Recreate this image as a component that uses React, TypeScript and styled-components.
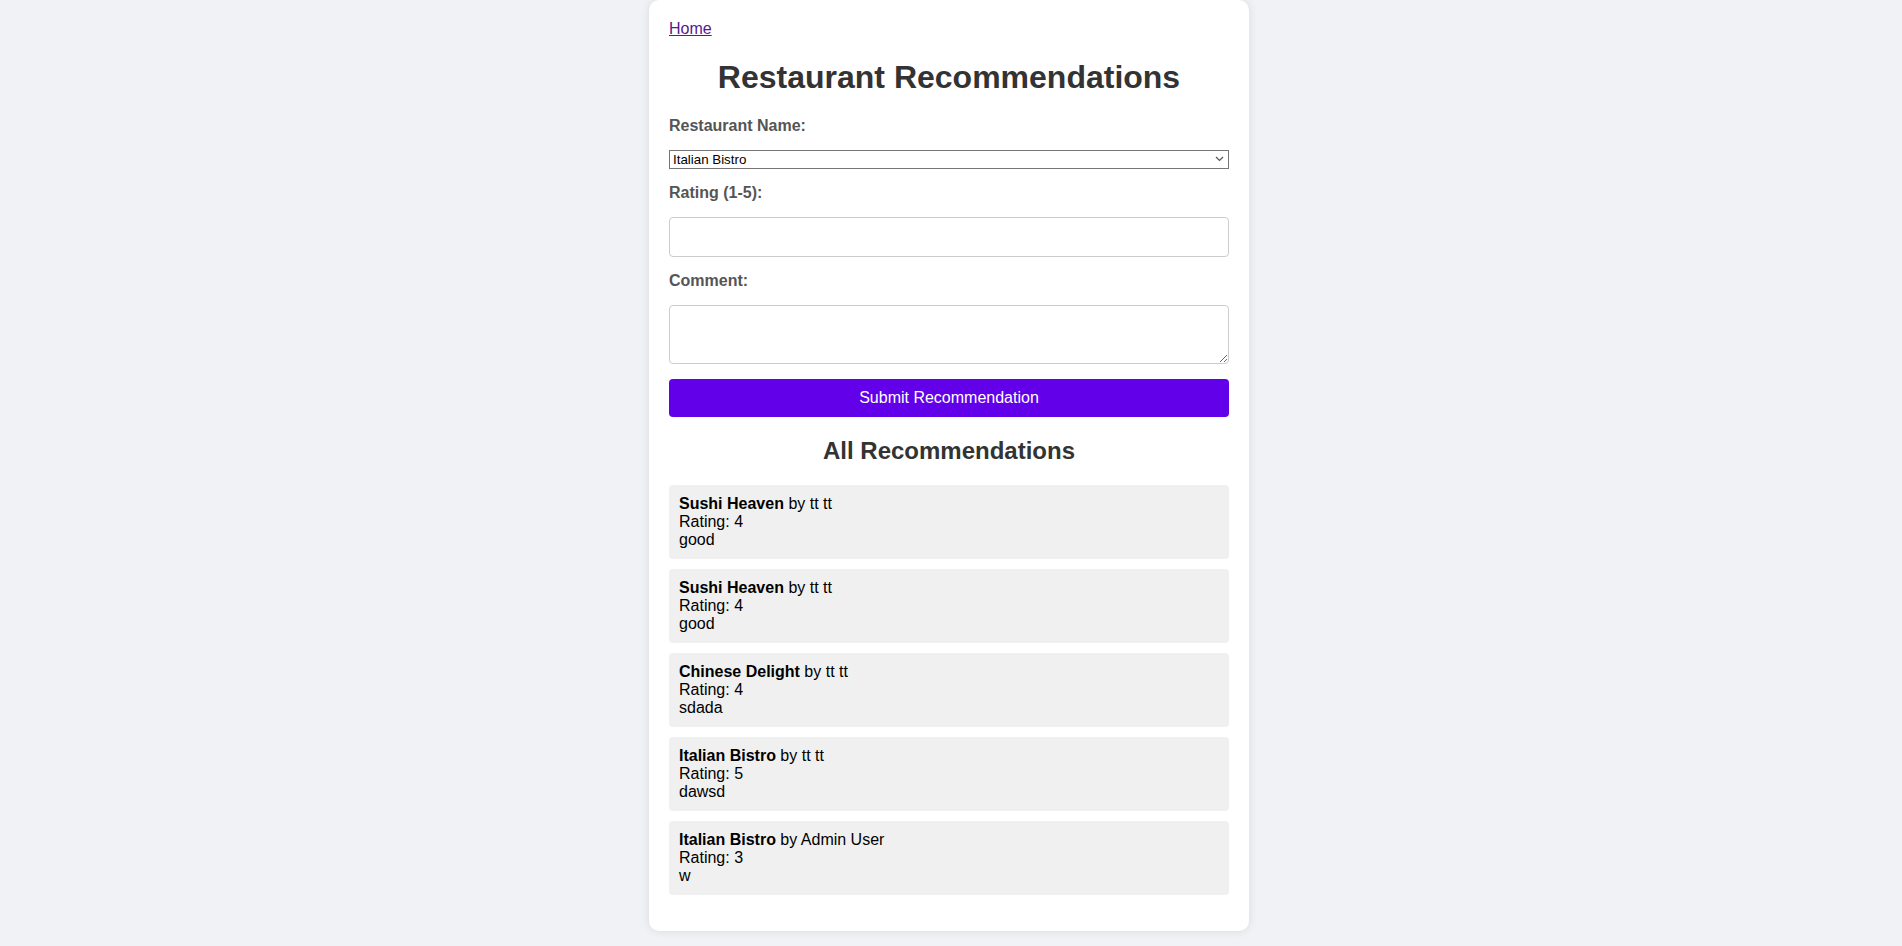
import styled, { createGlobalStyle } from 'styled-components'
import * as React from 'react'

const Global = createGlobalStyle`
  * {
    box-sizing: border-box;
  }
  body {
    margin: 0;
    padding: 0 4px 0 0;
    background: #f0f2f5;
    font-family: Arial, "Liberation Sans", sans-serif;
  }
`

const Card = styled.div`
  width: 600px;
  margin: 0 auto 15px;
  padding: 20px;
  background: #fff;
  border-radius: 10px;
  box-shadow: 0 0 10px rgba(0, 0, 0, 0.1);
`

const HomeLink = styled.a`
  display: inline-block;
  font-size: 16px;
  line-height: 18px;
  color: #551a8b;
  text-decoration: underline;
`

const Title = styled.h1`
  font-size: 32px;
  color: #333;
  text-align: center;
  margin: 21px 0;
`

const Form = styled.form`
  display: flex;
  flex-direction: column;
  gap: 15px;
`

const Label = styled.label`
  display: block;
  font-weight: bold;
  font-size: 16px;
  line-height: 18px;
  color: #555;
`

const SelectWrap = styled.div`
  position: relative;
  height: 19px;
`

const Select = styled.select`
  appearance: none;
  width: 100%;
  height: 19px;
  padding: 0 20px 0 3px;
  font-family: Arial, "Liberation Sans", sans-serif;
  font-size: 13.33px;
  color: #000;
  background: #fff;
  border: 1px solid #767676;
  border-radius: 0;
`

const Chevron = styled.svg`
  position: absolute;
  right: 5px;
  top: 6px;
  width: 9px;
  height: 6px;
  pointer-events: none;
`

const Input = styled.input`
  width: 100%;
  height: 40px;
  padding: 10px;
  font-size: 16px;
  border: 1px solid #ccc;
  border-radius: 4px;
`

const TextArea = styled.textarea`
  width: 100%;
  height: 59px;
  padding: 10px;
  font-size: 16px;
  font-family: Arial, "Liberation Sans", sans-serif;
  border: 1px solid #ccc;
  border-radius: 4px;
  display: block;
`

const SubmitButton = styled.button`
  width: 100%;
  height: 38px;
  padding: 10px;
  background: #6200ea;
  color: #fff;
  font-family: Arial, "Liberation Sans", sans-serif;
  font-size: 16px;
  line-height: 18px;
  border: none;
  border-radius: 4px;
  cursor: pointer;
`

const SubTitle = styled.h2`
  font-size: 24px;
  color: #333;
  text-align: center;
  margin: 20px 0;
`

const List = styled.ul`
  list-style: none;
  padding: 0;
  margin: 0 0 16px;
`

const Item = styled.li`
  background: #f0f0f0;
  padding: 10px;
  border-radius: 4px;
  font-size: 16px;
  line-height: 18px;
  color: #000;
  & + & {
    margin-top: 10px;
  }
`

const recs = [
  { name: 'Sushi Heaven', by: 'tt tt', rating: 4, comment: 'good' },
  { name: 'Sushi Heaven', by: 'tt tt', rating: 4, comment: 'good' },
  { name: 'Chinese Delight', by: 'tt tt', rating: 4, comment: 'sdada' },
  { name: 'Italian Bistro', by: 'tt tt', rating: 5, comment: 'dawsd' },
  { name: 'Italian Bistro', by: 'Admin User', rating: 3, comment: 'w' },
]

export default function App () {
  return (
    <>
      <Global/>
      <Card>
        <HomeLink href='#'>Home</HomeLink>
        <Title>Restaurant Recommendations</Title>
        <Form onSubmit={e => e.preventDefault()}>
          <Label>Restaurant Name:</Label>
          <SelectWrap>
            <Select defaultValue='Italian Bistro'>
              <option>Sushi Heaven</option>
              <option>Chinese Delight</option>
              <option>Italian Bistro</option>
            </Select>
            <Chevron viewBox='0 0 9 6'>
              <path d='M1 1l3.5 3.5L8 1' fill='none' stroke='#555' strokeWidth='1.2'/>
            </Chevron>
          </SelectWrap>
          <Label>Rating (1-5):</Label>
          <Input type='number' min={1} max={5}/>
          <Label>Comment:</Label>
          <TextArea/>
          <SubmitButton type='submit'>Submit Recommendation</SubmitButton>
        </Form>
        <SubTitle>All Recommendations</SubTitle>
        <List>
          {recs.map((r, i) => (
            <Item key={i}>
              <strong>{r.name}</strong> by {r.by}<br/>
              Rating: {r.rating}<br/>
              {r.comment}
            </Item>
          ))}
        </List>
      </Card>
    </>
  )
}
